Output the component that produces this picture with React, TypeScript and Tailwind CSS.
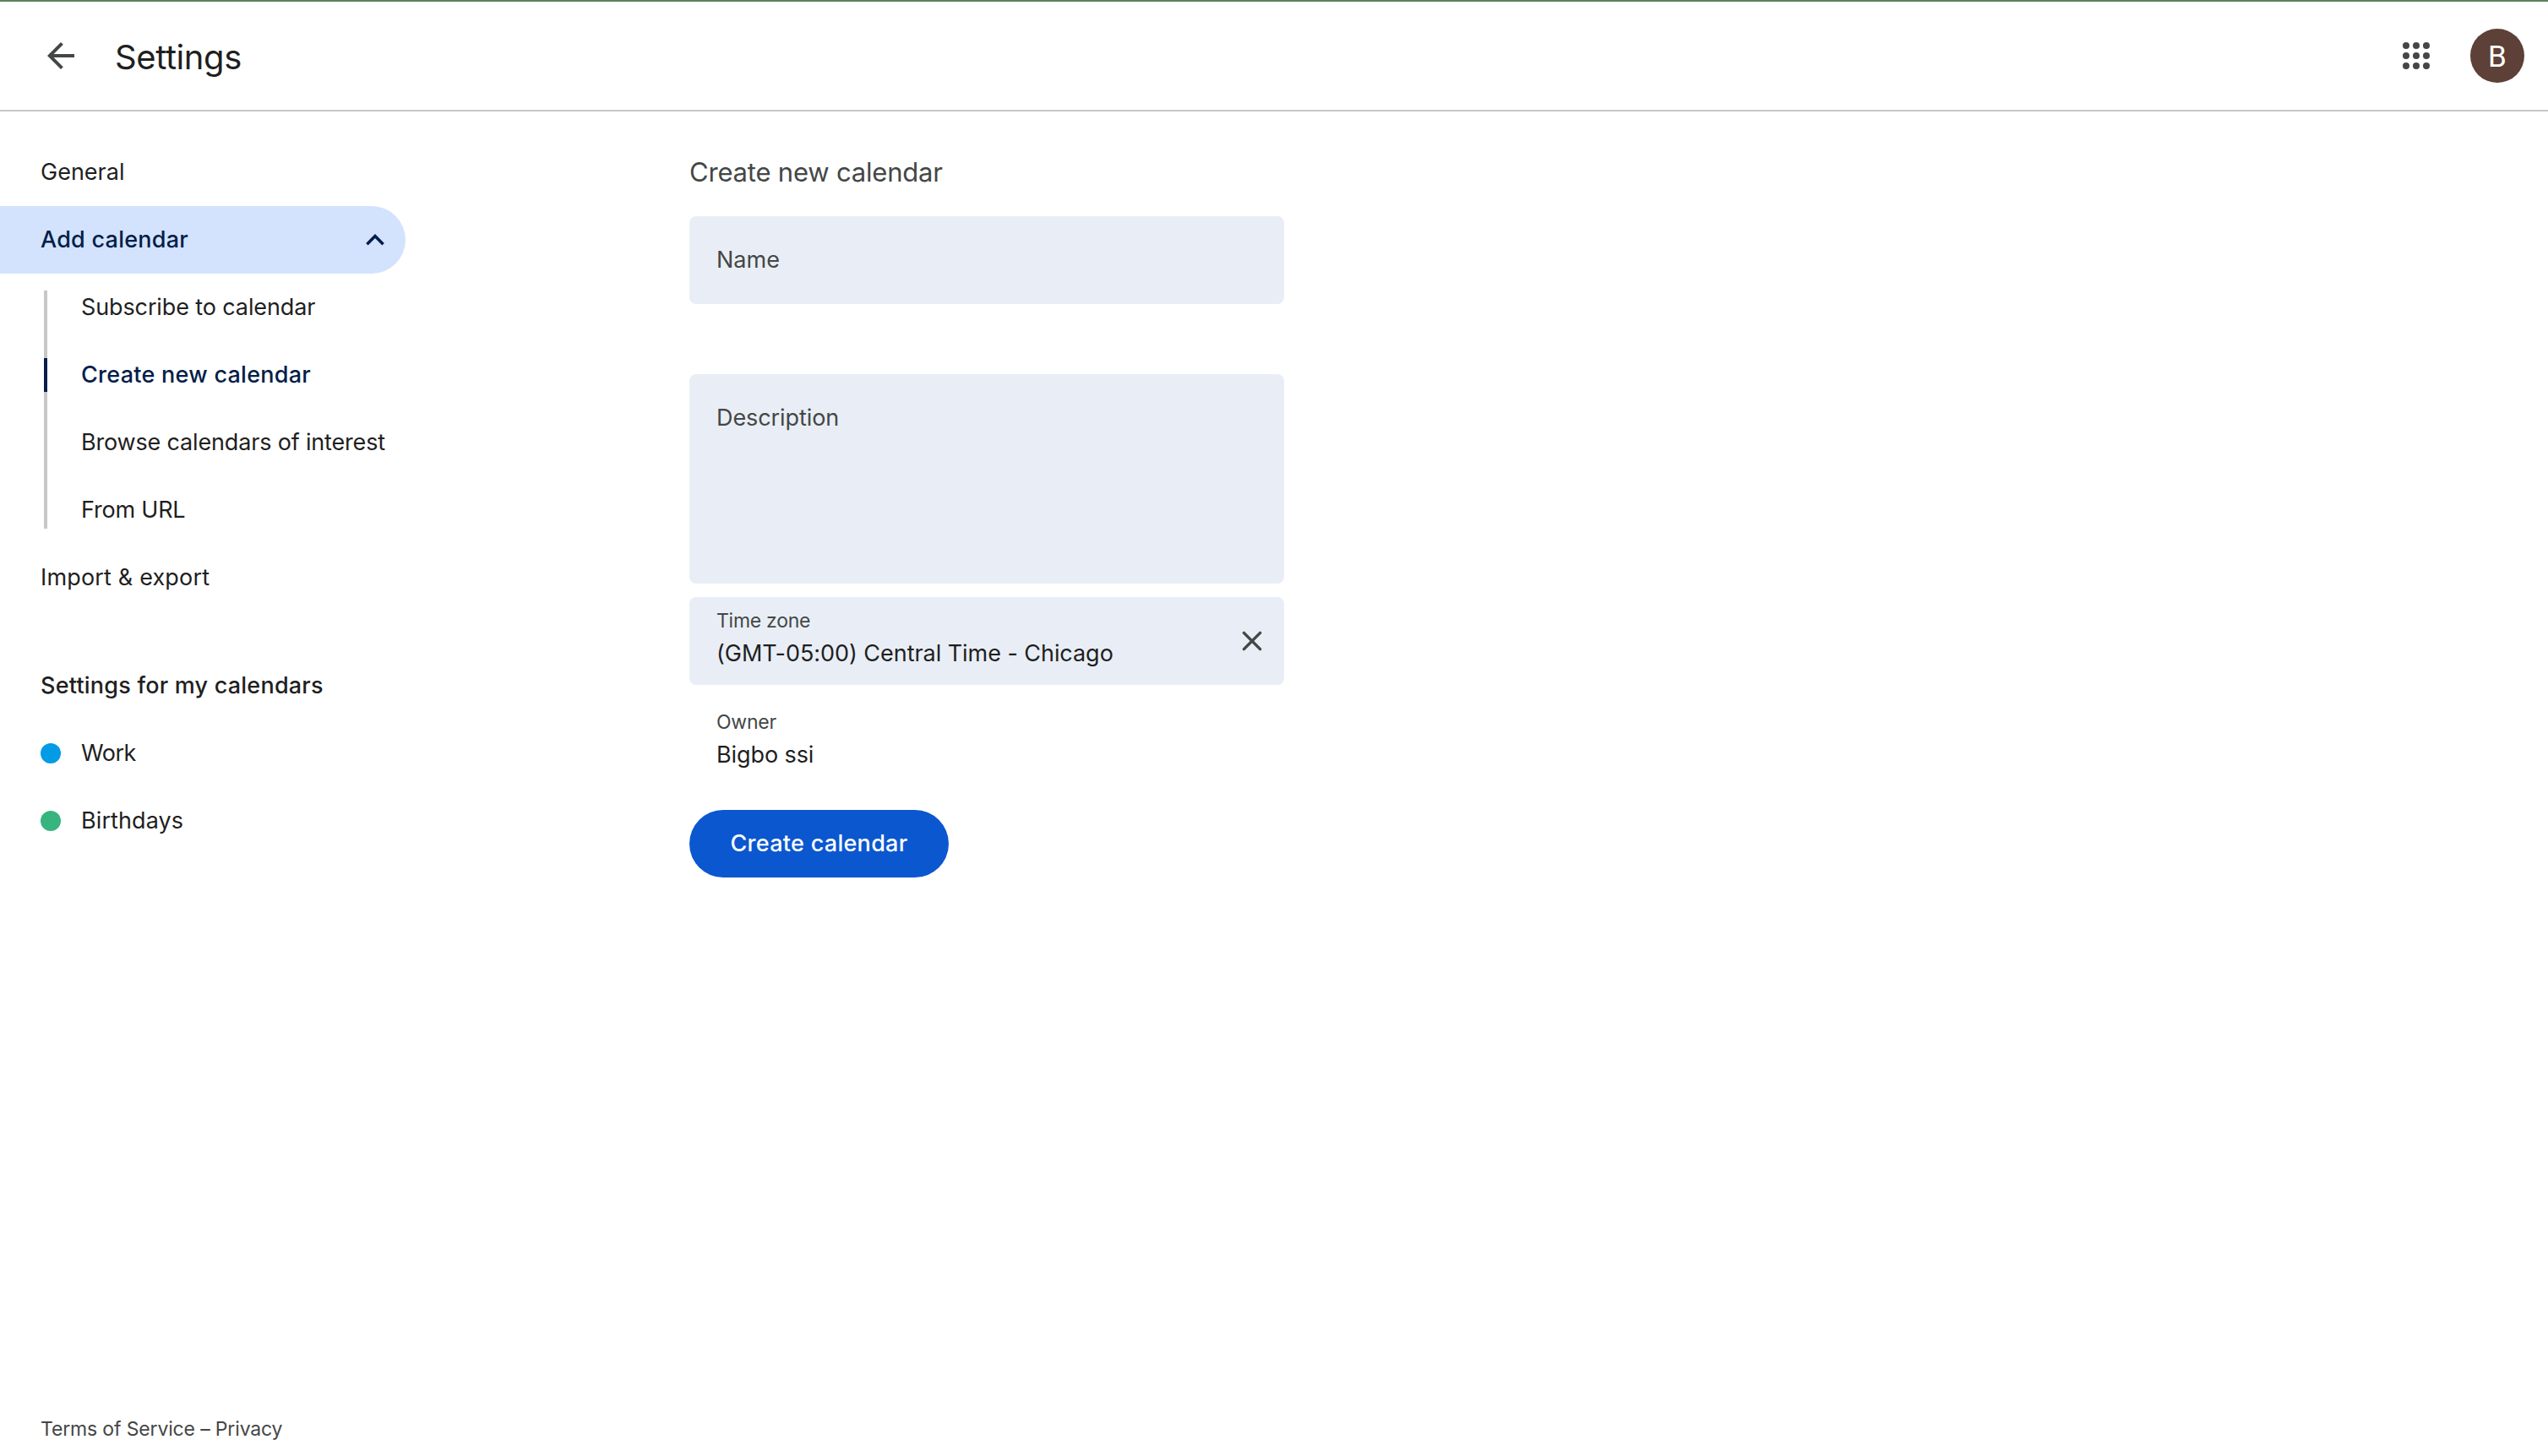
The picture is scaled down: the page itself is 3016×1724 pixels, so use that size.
type NavLink = {
    id: string;
    label: string;
    tracking: string;
    active?: boolean;
};

const calendarLinks: NavLink[] = [
    { id: 'subscribe', label: 'Subscribe to calendar', tracking: 'tracking-[-0.12px]' },
    { id: 'create', label: 'Create new calendar', tracking: 'tracking-[0.27px]', active: true },
    { id: 'browse', label: 'Browse calendars of interest', tracking: 'tracking-[-0.17px]' },
    { id: 'url', label: 'From URL', tracking: 'tracking-[-0.2px]' },
];

const myCalendars = [
    { id: 'work', label: 'Work', dot: 'bg-[#039be5]', tracking: 'tracking-[-0.5px]' },
    { id: 'birthdays', label: 'Birthdays', dot: 'bg-[#38b47e]', tracking: 'tracking-[0.1px]' },
];

function Header() {
    return (
        <header className="flex h-[132px] items-center justify-between border-t-2 border-t-[#5b8258] border-b-2 border-b-[#c7c7c7] pl-12 pr-7">
            <div className="flex items-center">
                <button aria-label="Go back">
                    <svg className="size-12" viewBox="0 0 24 24" fill="#444746">
                        <path d="M20 11H7.83l5.59-5.59L12 4l-8 8 8 8 1.41-1.41L7.83 13H20v-2z" />
                    </svg>
                </button>
                <h1 className="ml-10 pt-[3px] text-[40px] leading-[56px] tracking-[-0.4px]">Settings</h1>
            </div>
            <div className="flex items-center gap-10">
                <button aria-label="Google apps">
                    <svg className="size-12" viewBox="0 0 24 24" fill="#444746">
                        {[6, 12, 18].map((y) =>
                            [6, 12, 18].map((x) => <circle key={`${x}-${y}`} cx={x} cy={y} r="2" />)
                        )}
                    </svg>
                </button>
                <div className="flex size-16 items-center justify-center rounded-full bg-[#5d4037] pt-0.5 font-['Roboto'] text-[35px] leading-none text-white">
                    B
                </div>
            </div>
        </header>
    );
}

function Sidebar() {
    return (
        <aside className="flex w-[816px] shrink-0 flex-col text-[27px] leading-10">
            <nav className="flex w-[480px] flex-col whitespace-nowrap">
                <a className="flex h-20 items-center pl-12">General</a>
                <a className="flex h-20 items-center justify-between rounded-r-full bg-[#d3e3fd] pl-12 pr-4 font-medium tracking-[0.25px] text-[#041e49]">
                    Add calendar
                    <svg className="size-10" viewBox="0 0 40 40" fill="none" stroke="#041e49" strokeWidth="3.6">
                        <path d="M10.4 25.2 20 15.6l9.6 9.6" />
                    </svg>
                </a>

                {/* Nested links with the progress rail */}
                <div className="flex pl-[52px]">
                    <div className="mb-[18px] mt-5 flex w-1 flex-col bg-[#c7c7c7]">
                        <div className="mt-20 h-10 bg-[#041e49]" />
                    </div>
                    <div className="flex flex-col pl-10">
                        {calendarLinks.map((link) => (
                            <a
                                key={link.id}
                                className={`flex h-20 items-center ${link.tracking} ${link.active ? 'font-medium text-[#041e49]' : ''}`}
                            >
                                {link.label}
                            </a>
                        ))}
                    </div>
                </div>

                <a className="flex h-20 items-center pl-12 tracking-[0.17px]">Import &amp; export</a>

                <h2 className="mt-12 flex h-20 items-center pl-12 font-medium tracking-[0.22px]">
                    Settings for my calendars
                </h2>
                {myCalendars.map((calendar) => (
                    <a key={calendar.id} className="flex h-20 items-center gap-6 pl-12">
                        <span className={`size-6 rounded-full ${calendar.dot}`} />
                        <span className={calendar.tracking}>{calendar.label}</span>
                    </a>
                ))}
            </nav>
            <footer className="mt-auto pb-3 pl-12 text-[23px] leading-10 tracking-[-0.15px] text-[#444746]">
                Terms of Service – Privacy
            </footer>
        </aside>
    );
}

function CreateForm() {
    return (
        <section className="flex w-[704px] flex-col text-[27px] leading-10">
            <h2 className="flex h-[92px] items-start pt-[19px] text-[31px] leading-[42px] tracking-[-0.2px] text-[#444746]">
                Create new calendar
            </h2>
            <div className="h-[104px] rounded-lg bg-[#e9eef6] px-8 pt-8 text-[#444746]">Name</div>
            <div className="mt-[83px] h-[248px] rounded-lg bg-[#e9eef6] px-8 pt-8 tracking-[-0.08px] text-[#444746]">
                Description
            </div>
            <div className="mt-4 flex h-[104px] items-center justify-between rounded-lg bg-[#e9eef6] pl-8 pr-[18px]">
                <div className="flex h-full flex-col gap-[3px] pt-3">
                    <span className="text-[23px] leading-8 tracking-[-0.27px] text-[#444746]">Time zone</span>
                    <span className="tracking-[-0.05px]">(GMT-05:00) Central Time - Chicago</span>
                </div>
                <svg className="size-10" viewBox="0 0 40 40" fill="none" stroke="#444746" strokeWidth="3.4" strokeLinecap="round">
                    <path d="M10.4 10.4l19.2 19.2M29.6 10.4 10.4 29.6" />
                </svg>
            </div>
            <div className="mt-4 flex h-[104px] flex-col gap-[3px] px-8 pt-3">
                <span className="text-[23px] leading-8 tracking-[-0.25px] text-[#444746]">Owner</span>
                <span className="tracking-[-0.1px]">Bigbo ssi</span>
            </div>
            <button className="mt-7 h-20 w-[307px] rounded-full bg-[#0b57d0] font-medium tracking-[0.28px] text-white">
                Create calendar
            </button>
        </section>
    );
}

export default function App() {
    return (
        <div className="flex h-[1724px] w-[3016px] flex-col bg-white font-['Inter',sans-serif] text-[#1f1f1f]">
            <Header />
            <div className="flex grow pt-8">
                <Sidebar />
                <CreateForm />
            </div>
        </div>
    );
}
